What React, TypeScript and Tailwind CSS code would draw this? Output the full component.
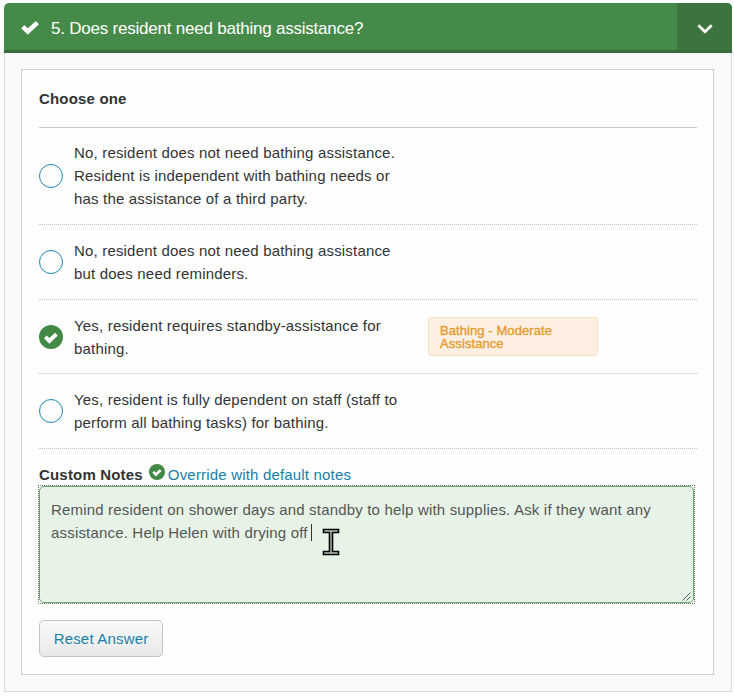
import { useState } from 'react'

type Option = {
  id: number
  lines: string[]
  tag?: string[]
  height: string
}

const options: Option[] = [
  {
    id: 1,
    lines: [
      'No, resident does not need bathing assistance.',
      'Resident is independent with bathing needs or',
      'has the assistance of a third party.',
    ],
    height: 'h-[97px]',
  },
  {
    id: 2,
    lines: ['No, resident does not need bathing assistance', 'but does need reminders.'],
    height: 'h-[75px]',
  },
  {
    id: 3,
    lines: ['Yes, resident requires standby-assistance for', 'bathing.'],
    tag: ['Bathing - Moderate', 'Assistance'],
    height: 'h-[74px]',
  },
  {
    id: 4,
    lines: ['Yes, resident is fully dependent on staff (staff to', 'perform all bathing tasks) for bathing.'],
    height: 'h-[75px]',
  },
]

const notes = [
  'Remind resident on shower days and standby to help with supplies. Ask if they want any',
  'assistance. Help Helen with drying off',
]

function CheckCircle({ className }: { className?: string }) {
  return (
    <svg viewBox="0 0 24 24" className={className}>
      <circle cx="12" cy="12" r="12" fill="#438946" />
      <path d="M5 13.2 7.7 10.5 10.3 13.1 16.1 7.8 18.8 10.4 10.3 18.7Z" fill="#fff" />
    </svg>
  )
}

function TextCursor() {
  return (
    <svg viewBox="0 0 18 30" className="absolute left-[283px] top-[41px] h-[30px] w-[18px]">
      <path
        d="M1.5 2.5H16.5V5.5H10.5V24.5H16.5V27.5H1.5V24.5H7.5V5.5H1.5Z"
        fill="#bdc3bd"
        stroke="#000"
        strokeWidth="1.6"
      />
    </svg>
  )
}

export default function App() {
  const [selected, setSelected] = useState(3)

  return (
    <div className="h-[696px] w-[734px] overflow-hidden bg-[#fefefe] pl-1 pt-[3px] font-['Liberation_Sans',Arial,sans-serif] text-[15px] leading-[23px] tracking-[0.18px] text-[#333]">
      <div className="w-[728px]">
        {/* Question header */}
        <div className="flex h-[50px] overflow-hidden rounded-t-[5px] border-b-[3px] border-[#376b39] bg-[#468a49] text-white">
          <div className="flex flex-1 items-center pl-[17px] pt-[3px]">
            <svg viewBox="0 0 18 14" className="h-[14px] w-[18px]">
              <path
                d="M1 7.3 3.4 4.9 6.8 8.1 14.7 0.9 17.1 3.2 6.8 12.9Z"
                fill="#fff"
                stroke="#fff"
                strokeWidth="1.2"
                strokeLinejoin="round"
              />
            </svg>
            <h2 className="ml-3 whitespace-nowrap text-[17px] tracking-[-0.22px]">
              5. Does resident need bathing assistance?
            </h2>
          </div>
          <button className="-mb-[3px] flex w-[55px] items-center justify-center bg-[#3c743e]">
            <svg viewBox="0 0 16 10" className="mt-[2px] h-[10px] w-4">
              <path d="M1.3 1.2 8 7.8 14.7 1.2" fill="none" stroke="#fff" strokeWidth="2.7" />
            </svg>
          </button>
        </div>

        <div className="h-[639px] border border-t-0 border-[#dcdcde] bg-[#fafafb] px-4 pt-4">
          <div className="h-[606px] w-[693px] border border-[#cfcfd1] bg-[#fefefe] pl-[17px] pr-4">
            <h3 className="flex h-[58px] items-center border-b border-[#cacacc] pb-px font-bold">
              Choose one
            </h3>

            {options.map((o) => (
              <div key={o.id} className={`flex items-center border-b border-dotted border-[#c4c4c8] ${o.height}`}>
                <button onClick={() => setSelected(o.id)} className="h-6 w-6 shrink-0">
                  {selected === o.id ? (
                    <CheckCircle className="h-6 w-6" />
                  ) : (
                    <span className="block h-6 w-6 rounded-full border-[1.5px] border-[#1c87b8]" />
                  )}
                </button>
                <p className={`ml-[11px] w-[354px] whitespace-nowrap ${o.lines.length > 2 ? 'pb-px' : ''}`}>
                  {o.lines.map((line) => (
                    <span key={line} className="block">{line}</span>
                  ))}
                </p>
                {o.tag && (
                  <div className="h-[39px] w-[170px] rounded-[3px] border border-[#f8dfc0] bg-[#fdf0e2] pl-[11px] pt-[6px] text-[13px] leading-[13px] tracking-[0.08px] text-[#e69a30] [-webkit-text-stroke:0.35px_#e69a30]">
                    {o.tag.map((line) => (
                      <span key={line} className="block">{line}</span>
                    ))}
                  </div>
                )}
              </div>
            ))}

            <div className="flex h-9 items-center pt-[14px]">
              <span className="font-bold">Custom Notes</span>
              <CheckCircle className="mb-1 ml-[6px] mr-[3px] h-4 w-4" />
              <a href="#" className="text-[#1880a8]">Override with default notes</a>
            </div>

            <div className="relative -ml-px h-[119px] w-[657px] border border-dotted border-[#6b6b6b]">
              <div className="h-full rounded-[5px] border border-[#6aa66d] bg-[#e7f3e7] pl-[11px] pt-[11px] text-[#555]">
                {notes.map((line, i) => (
                  <p key={line} className="flex items-center whitespace-nowrap">
                    {line}
                    {i === notes.length - 1 && <span className="ml-[3px] h-[17px] w-px bg-[#333]" />}
                  </p>
                ))}
              </div>
              <TextCursor />
              <svg viewBox="0 0 9 9" className="absolute bottom-[2px] right-[3px] h-[9px] w-[9px]">
                <path d="M0.5 8.5 8.5 0.5M4.5 8.5 8.5 4.5" stroke="#555" strokeWidth="1" />
              </svg>
            </div>

            <button className="mt-4 h-[37px] w-[124px] rounded-[5px] border border-[#c3c3c5] bg-linear-to-b from-[#fafafa] to-[#e9e9eb] text-[#1880a8]">
              Reset Answer
            </button>
          </div>
        </div>
      </div>
    </div>
  )
}
